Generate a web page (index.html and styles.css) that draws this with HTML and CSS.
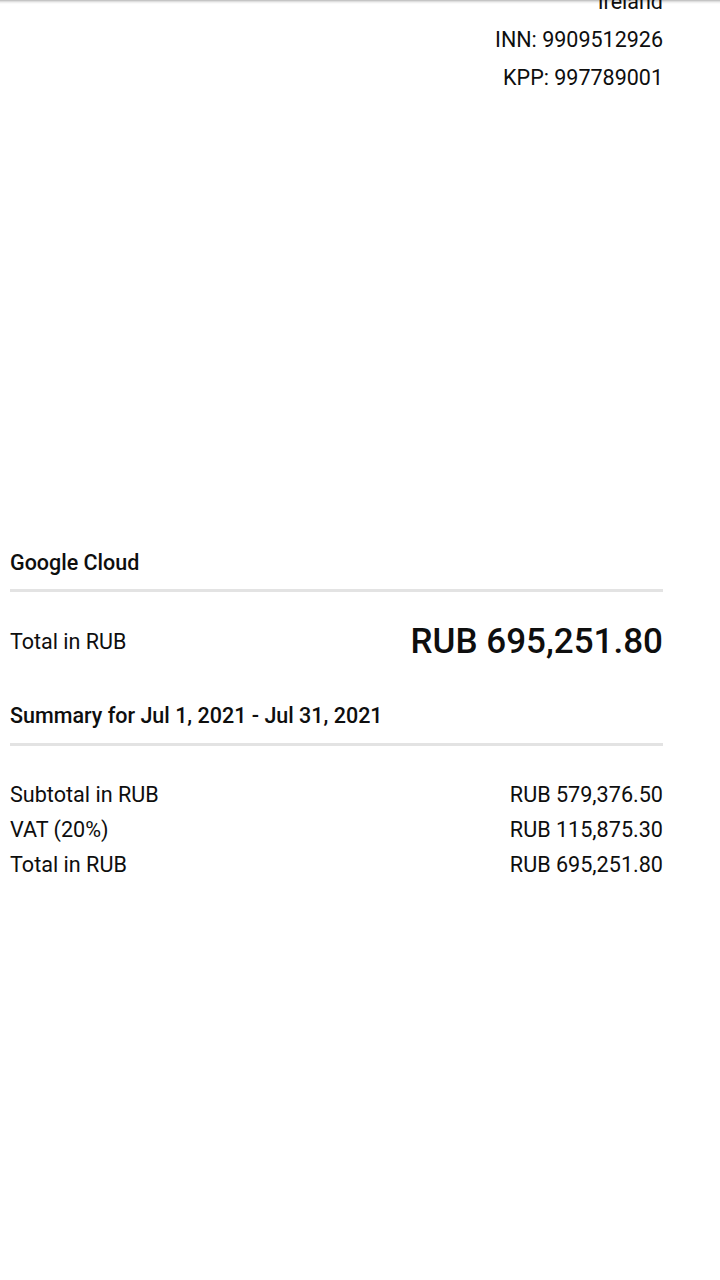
FILE: index.html
```html
<!DOCTYPE html>
<html lang="en">
<head>
<meta charset="utf-8">
<title>Invoice</title>
<link rel="stylesheet" href="styles.css">
</head>
<body>
<div class="topshadow"></div>
<main class="page">
  <section class="address">
    <div class="addr-line">Ireland</div>
    <div class="addr-line">INN: 9909512926</div>
    <div class="addr-line">KPP: 997789001</div>
  </section>

  <section class="block first">
    <h2 class="heading">Google Cloud</h2>
    <div class="divider"></div>
    <div class="total-row">
      <span class="total-label">Total in RUB</span>
      <span class="total-value">RUB 695,251.80</span>
    </div>
  </section>

  <section class="block summary">
    <h2 class="heading">Summary for Jul 1, 2021 - Jul 31, 2021</h2>
    <div class="divider"></div>
    <div class="rows">
      <div class="row"><span>Subtotal in RUB</span><span>RUB 579,376.50</span></div>
      <div class="row"><span>VAT (20%)</span><span>RUB 115,875.30</span></div>
      <div class="row"><span>Total in RUB</span><span>RUB 695,251.80</span></div>
    </div>
  </section>
</main>
</body>
</html>
```
FILE: styles.css
```css
html, body {
  margin: 0;
  padding: 0;
  background: #ffffff;
}
body {
  font-family: Roboto, "Noto Sans", Arial, sans-serif;
  color: #0e0e0e;
  overflow: hidden;
  height: 1280px;
}
.topshadow {
  position: fixed;
  top: 0;
  left: 0;
  right: 0;
  height: 4px;
  background: linear-gradient(to bottom, rgba(0,0,0,0.28), rgba(0,0,0,0.08) 50%, rgba(0,0,0,0));
  z-index: 5;
}
.page {
  padding: 0 57px 0 10px;
}
.address {
  margin-top: -17px;
  text-align: right;
  font-size: 21.5px;
}
.addr-line {
  line-height: 38px;
}
.block.first {
  margin-top: 454px;
}
.heading {
  margin: 0;
  font-size: 21.5px;
  font-weight: 500;
  line-height: 24px;
}
.divider {
  height: 3px;
  background: #e3e3e3;
  margin-top: 14px;
}
.summary .divider {
  margin-top: 15px;
}
.total-row {
  margin-top: 30px;
  display: flex;
  justify-content: space-between;
  align-items: center;
}
.total-label {
  font-size: 21.5px;
  line-height: 24px;
}
.total-value {
  font-size: 35px;
  font-weight: 500;
  line-height: 40px;
}
.summary {
  margin-top: 42px;
}
.rows {
  margin-top: 31px;
}
.row {
  display: flex;
  justify-content: space-between;
  font-size: 21.6px;
  line-height: 35px;
}
```
